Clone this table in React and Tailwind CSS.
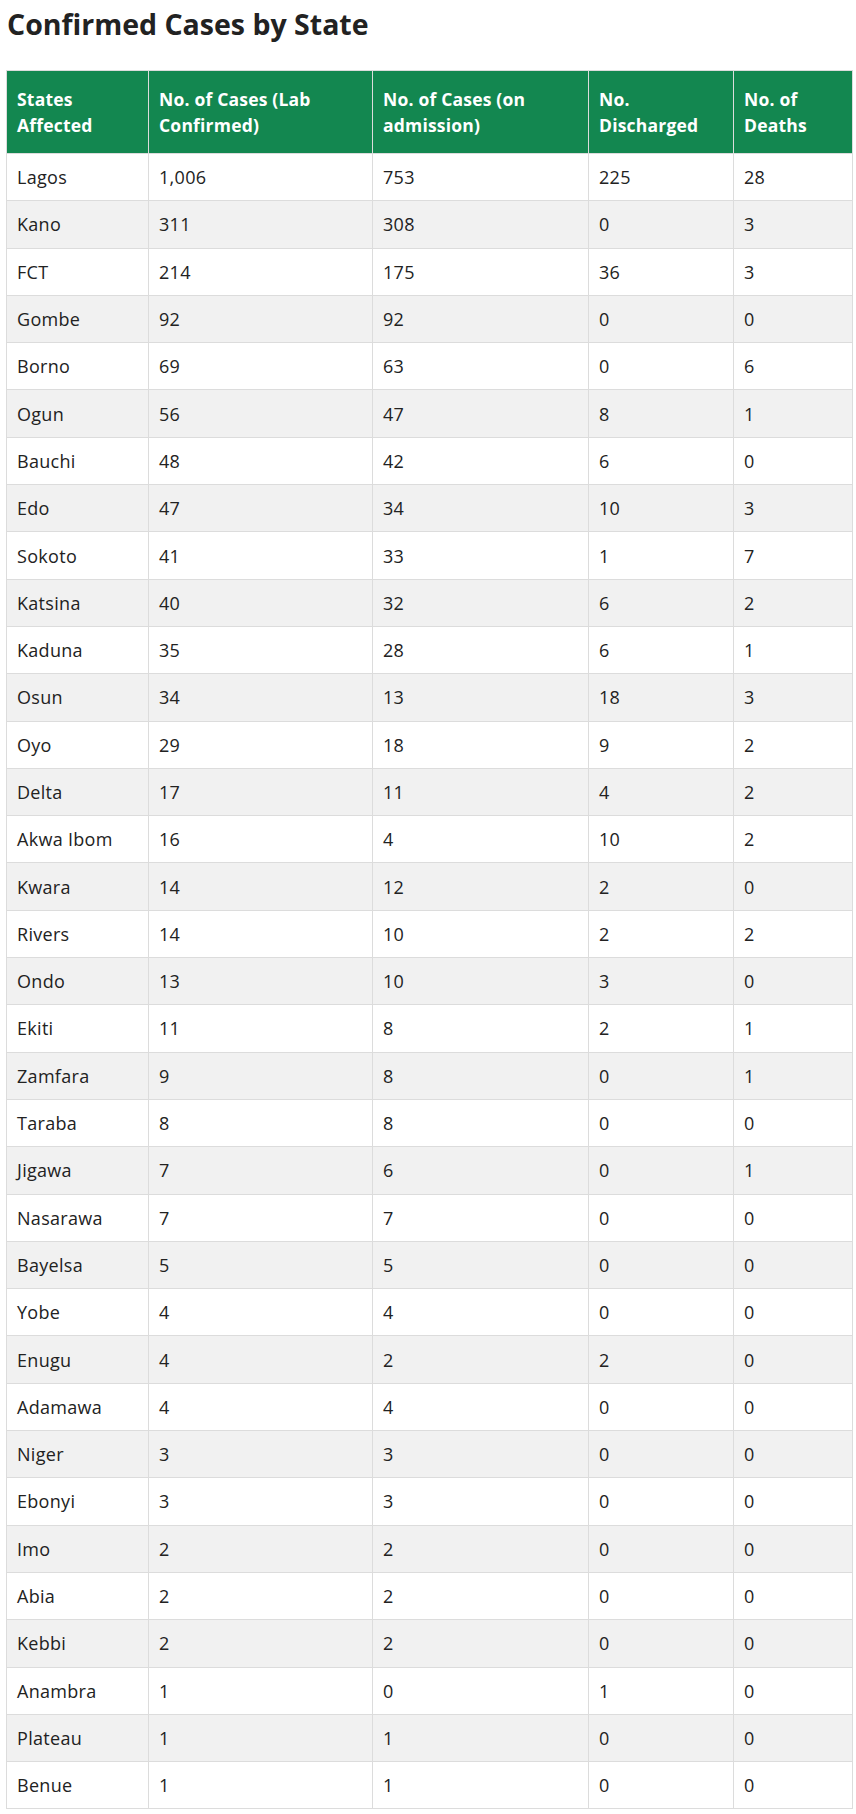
import React from 'react';

const rows = [
    ['Lagos', '1,006', '753', '225', '28'],
    ['Kano', '311', '308', '0', '3'],
    ['FCT', '214', '175', '36', '3'],
    ['Gombe', '92', '92', '0', '0'],
    ['Borno', '69', '63', '0', '6'],
    ['Ogun', '56', '47', '8', '1'],
    ['Bauchi', '48', '42', '6', '0'],
    ['Edo', '47', '34', '10', '3'],
    ['Sokoto', '41', '33', '1', '7'],
    ['Katsina', '40', '32', '6', '2'],
    ['Kaduna', '35', '28', '6', '1'],
    ['Osun', '34', '13', '18', '3'],
    ['Oyo', '29', '18', '9', '2'],
    ['Delta', '17', '11', '4', '2'],
    ['Akwa Ibom', '16', '4', '10', '2'],
    ['Kwara', '14', '12', '2', '0'],
    ['Rivers', '14', '10', '2', '2'],
    ['Ondo', '13', '10', '3', '0'],
    ['Ekiti', '11', '8', '2', '1'],
    ['Zamfara', '9', '8', '0', '1'],
    ['Taraba', '8', '8', '0', '0'],
    ['Jigawa', '7', '6', '0', '1'],
    ['Nasarawa', '7', '7', '0', '0'],
    ['Bayelsa', '5', '5', '0', '0'],
    ['Yobe', '4', '4', '0', '0'],
    ['Enugu', '4', '2', '2', '0'],
    ['Adamawa', '4', '4', '0', '0'],
    ['Niger', '3', '3', '0', '0'],
    ['Ebonyi', '3', '3', '0', '0'],
    ['Imo', '2', '2', '0', '0'],
    ['Abia', '2', '2', '0', '0'],
    ['Kebbi', '2', '2', '0', '0'],
    ['Anambra', '1', '0', '1', '0'],
    ['Plateau', '1', '1', '0', '0'],
    ['Benue', '1', '1', '0', '0'],
];

const headers = [
    ['States', 'Affected'],
    ['No. of Cases (Lab', 'Confirmed)'],
    ['No. of Cases (on', 'admission)'],
    ['No.', 'Discharged'],
    ['No. of', 'Deaths'],
];

const colWidths = ['w-[142px]', 'w-[224px]', 'w-[216px]', 'w-[145px]', 'w-[119px]'];

const App = () => {
    return (
        <div className="bg-white min-h-screen text-[#222] font-['Open_Sans',sans-serif]">
            <h1 className="pl-[7px] pt-[4px] text-[28.5px] leading-[40px] font-bold text-[#222]">
                Confirmed Cases by State
            </h1>

            <table className="ml-[6px] mt-[26px] w-[846px] border-collapse table-fixed">
                <thead>
                    <tr className="h-[83px] bg-[#138750]">
                        {headers.map((h, i) => (
                            <th
                                key={i}
                                className={`${colWidths[i]} border border-[#dcdcdc] px-[10px] text-left align-middle text-white font-bold text-[17.5px] leading-[26px] tracking-[0.2px]`}
                            >
                                {h[0]}
                                <br />
                                {h[1]}
                            </th>
                        ))}
                    </tr>
                </thead>
                <tbody>
                    {rows.map((row, i) => (
                        <tr key={row[0]} className={`h-[47.3px] ${i % 2 === 1 ? 'bg-[#f1f1f1]' : 'bg-white'}`}>
                            {row.map((cell, j) => (
                                <td key={j} className="border border-[#dcdcdc] px-[10px] text-[18px] leading-[24px] tracking-[0.3px] align-middle">
                                    {cell}
                                </td>
                            ))}
                        </tr>
                    ))}
                </tbody>
            </table>
        </div>
    );
};

export default App;
